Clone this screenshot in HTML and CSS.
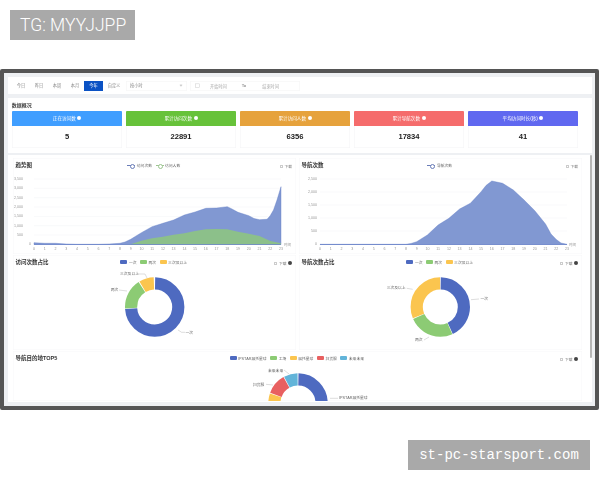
FILE: index.html
```html
<!DOCTYPE html>
<html lang="zh">

<head>
    <meta charset="UTF-8">
    <title>数据概况</title>
    <link rel="stylesheet" href="styles.css">
</head>

<body>
    <div class="tag tag_tg">TG: MYYJJPP</div>

    <section class="frame">
        <div class="toolbar">
            <ul class="range_btns">
                <li>今日</li>
                <li>昨日</li>
                <li>本周</li>
                <li>本月</li>
                <li class="on">今年</li>
                <li class="wide">自定义</li>
            </ul>
            <div class="select_box">按小时<span class="caret"></span></div>
            <div class="date_box">
                <svg class="cal_icon" viewBox="0 0 6 6">
                    <rect x="0.5" y="1" width="5" height="4.5" fill="none" stroke="#ccc" stroke-width="0.6" />
                </svg>
                <span class="date_start">开始时间</span>
                <span class="date_to">To</span>
                <span class="date_end">结束时间</span>
            </div>
        </div><!-- .toolbar end -->

        <div class="overview">
            <h2>数据概况</h2>
            <div class="cards">
                <div class="card">
                    <div class="card_head blue">正在访问数<i class="info"></i></div>
                    <div class="card_num">5</div>
                </div>
                <div class="card">
                    <div class="card_head green">累计访问次数<i class="info"></i></div>
                    <div class="card_num">22891</div>
                </div>
                <div class="card">
                    <div class="card_head orange">累计访问人数<i class="info"></i></div>
                    <div class="card_num">6356</div>
                </div>
                <div class="card">
                    <div class="card_head red">累计导航次数<i class="info"></i></div>
                    <div class="card_num">17834</div>
                </div>
                <div class="card">
                    <div class="card_head indigo">平均访问时长(秒)<i class="info"></i></div>
                    <div class="card_num">41</div>
                </div>
            </div>
        </div><!-- .overview end -->

        <div class="chart_wrap">
            <div class="chart_grid">

                <!-- 趋势图 -->
                <div class="cell">
                    <div class="cell_head">
                        <h3>趋势图</h3>
                        <ul class="legend">
                            <li><i class="mark_line line_blue"></i>访问次数</li>
                            <li><i class="mark_line line_green"></i>访问人数</li>
                        </ul>
                        <div class="down"><i class="down_icon"></i>下载</div>
                    </div>
                    <svg class="chart_svg" width="283" height="82" viewBox="13 172 283 82">
                        <g class="grid_lines">
                            <path d="M34 179H281M34 188.3H281M34 197.7H281M34 207H281M34 216.4H281M34 225.7H281M34 235H281" />
                        </g>
                        <g class="y_label">
                            <text x="23" y="180">3,500</text>
                            <text x="23" y="189.3">3,000</text>
                            <text x="23" y="198.7">2,500</text>
                            <text x="23" y="208">2,000</text>
                            <text x="23" y="217.4">1,500</text>
                            <text x="23" y="226.7">1,000</text>
                            <text x="23" y="236">500</text>
                            <text x="31" y="245.3">0</text>
                        </g>
                        <polygon class="area_blue" points="34,244.5 34,242.7 44.7,243.3 55.5,243.3 66.2,244 77,244.3 87.7,244.3 98.4,244.3 109.2,244 120,243.3 125,242 130.7,239.3 141.4,232.7 152.1,226.7 162.9,223.3 173.6,220 184.4,215 195.1,212 205.8,208.3 216.6,208 227.3,206.7 232,209 238,212.3 248.8,215.7 254,218.5 259.5,219.7 267,219.3 270,216 273.5,210 277,200 281,186.7 281,244.5" />
                        <polygon class="area_green" points="120,244.5 130.7,244.3 141.4,240.7 152.1,238.3 162.9,236.7 173.6,234.7 184.4,233.3 195.1,231 205.8,229.3 216.6,229 227.3,229.3 238,231.7 248.8,233.7 259.5,236 270.3,241 281,243.3 281,244.5" />
                        <path class="axis_line" d="M34 244.5H281" />
                        <g class="x_label">
                            <text x="34" y="249.5">0</text><text x="44.7" y="249.5">1</text><text x="55.5" y="249.5">2</text><text x="66.2" y="249.5">3</text><text x="77" y="249.5">4</text><text x="87.7" y="249.5">5</text><text x="98.4" y="249.5">6</text><text x="109.2" y="249.5">7</text><text x="120" y="249.5">8</text><text x="130.7" y="249.5">9</text><text x="141.4" y="249.5">10</text><text x="152.1" y="249.5">11</text><text x="162.9" y="249.5">12</text><text x="173.6" y="249.5">13</text><text x="184.4" y="249.5">14</text><text x="195.1" y="249.5">15</text><text x="205.8" y="249.5">16</text><text x="216.6" y="249.5">17</text><text x="227.3" y="249.5">18</text><text x="238" y="249.5">19</text><text x="248.8" y="249.5">20</text><text x="259.5" y="249.5">21</text><text x="270.3" y="249.5">22</text><text x="281" y="249.5">23</text>
                        </g>
                        <text class="tick_text" x="284" y="245.5">时间</text>
                    </svg>
                </div>

                <!-- 导航次数 -->
                <div class="cell">
                    <div class="cell_head">
                        <h3>导航次数</h3>
                        <ul class="legend">
                            <li><i class="mark_line line_blue"></i>导航次数</li>
                        </ul>
                        <div class="down"><i class="down_icon"></i>下载</div>
                    </div>
                    <svg class="chart_svg" width="283" height="82" viewBox="299 172 283 82">
                        <g class="grid_lines">
                            <path d="M320 179H567M320 192H567M320 205H567M320 218H567M320 231H567" />
                        </g>
                        <g class="y_label">
                            <text x="317" y="180">2,500</text>
                            <text x="317" y="193">2,000</text>
                            <text x="317" y="206">1,500</text>
                            <text x="317" y="219">1,000</text>
                            <text x="317" y="232">500</text>
                            <text x="317" y="245.3">0</text>
                        </g>
                        <polygon class="area_blue" points="320,244.5 320,244.3 405.9,244.3 411,243.5 416.7,241.7 427.4,235 438.1,225 448.9,218.3 459.6,209 470.4,203.3 481.1,191.7 486,185.5 491.8,181 502.6,183.3 513.3,190 524.1,200 534.8,210.7 545.5,224 551,234 556.3,239.5 561,243 567,244.3 567,244.5" />
                        <path class="axis_line" d="M320 244.5H567" />
                        <g class="x_label">
                            <text x="320" y="249.5">0</text><text x="330.7" y="249.5">1</text><text x="341.5" y="249.5">2</text><text x="352.2" y="249.5">3</text><text x="363" y="249.5">4</text><text x="373.7" y="249.5">5</text><text x="384.4" y="249.5">6</text><text x="395.2" y="249.5">7</text><text x="405.9" y="249.5">8</text><text x="416.7" y="249.5">9</text><text x="427.4" y="249.5">10</text><text x="438.1" y="249.5">11</text><text x="448.9" y="249.5">12</text><text x="459.6" y="249.5">13</text><text x="470.4" y="249.5">14</text><text x="481.1" y="249.5">15</text><text x="491.8" y="249.5">16</text><text x="502.6" y="249.5">17</text><text x="513.3" y="249.5">18</text><text x="524.1" y="249.5">19</text><text x="534.8" y="249.5">20</text><text x="545.5" y="249.5">21</text><text x="556.3" y="249.5">22</text><text x="567" y="249.5">23</text>
                        </g>
                        <text class="tick_text" x="569" y="245.5">时间</text>
                    </svg>
                </div>

                <!-- 访问次数占比 -->
                <div class="cell">
                    <div class="cell_head">
                        <h3>访问次数占比</h3>
                        <ul class="legend">
                            <li><i class="mark_box box_blue"></i>一次</li>
                            <li><i class="mark_box box_green"></i>两次</li>
                            <li><i class="mark_box box_yellow"></i>三次及以上</li>
                        </ul>
                        <div class="down"><i class="down_icon"></i>下载<i class="help"></i></div>
                    </div>
                    <svg class="chart_svg" width="283" height="81" viewBox="13 269 283 81">
                        <g transform="rotate(-90 154.7 307)">
                            <circle class="arc arc_blue" cx="154.7" cy="307" r="23.6" pathLength="360" stroke-dasharray="265 95" stroke-dashoffset="-1" />
                            <circle class="arc arc_green" cx="154.7" cy="307" r="23.6" pathLength="360" stroke-dasharray="60 300" stroke-dashoffset="-267" />
                            <circle class="arc arc_yellow" cx="154.7" cy="307" r="23.6" pathLength="360" stroke-dasharray="29 331" stroke-dashoffset="-329" />
                        </g>
                        <path class="lead" d="M178 330L181.6 332.3H185M119 290L127 291M139 274H145L147 278" />
                        <text class="pie_text" x="185.5" y="333.5">一次</text>
                        <text class="pie_text" x="110.7" y="290.5">两次</text>
                        <text class="pie_text" x="120" y="274.5">三次及以上</text>
                    </svg>
                </div>

                <!-- 导航次数占比 -->
                <div class="cell">
                    <div class="cell_head">
                        <h3>导航次数占比</h3>
                        <ul class="legend">
                            <li><i class="mark_box box_blue"></i>一次</li>
                            <li><i class="mark_box box_green"></i>两次</li>
                            <li><i class="mark_box box_yellow"></i>三次及以上</li>
                        </ul>
                        <div class="down"><i class="down_icon"></i>下载<i class="help"></i></div>
                    </div>
                    <svg class="chart_svg" width="283" height="81" viewBox="299 269 283 81">
                        <g transform="rotate(-90 440.3 307)">
                            <circle class="arc arc_blue" cx="440.3" cy="307" r="23.6" pathLength="360" stroke-dasharray="154 206" stroke-dashoffset="-1" />
                            <circle class="arc arc_green" cx="440.3" cy="307" r="23.6" pathLength="360" stroke-dasharray="90 270" stroke-dashoffset="-156" />
                            <circle class="arc arc_yellow" cx="440.3" cy="307" r="23.6" pathLength="360" stroke-dasharray="112 248" stroke-dashoffset="-247.5" />
                        </g>
                        <path class="lead" d="M471 299.7L479 299M424 340L429 337M406.7 288.3L412.7 289.3" />
                        <text class="pie_text" x="480.5" y="300.2">一次</text>
                        <text class="pie_text" x="415" y="340.5">两次</text>
                        <text class="pie_text" x="386.7" y="288.9">三次及以上</text>
                    </svg>
                </div>

                <!-- 导航目的地TOP5 -->
                <div class="cell cell_full">
                    <div class="cell_head">
                        <h3>导航目的地TOP5</h3>
                        <ul class="legend">
                            <li><i class="mark_box box_blue"></i>IPSTAR展托星球</li>
                            <li><i class="mark_box box_green"></i>工场</li>
                            <li><i class="mark_box box_yellow"></i>展托星球</li>
                            <li><i class="mark_box box_red"></i>扫货服</li>
                            <li><i class="mark_box box_sky"></i>未来未来</li>
                        </ul>
                        <div class="down"><i class="down_icon"></i>下载<i class="help"></i></div>
                    </div>
                    <svg class="chart_svg" width="569" height="36" viewBox="13 365 569 36">
                        <g transform="rotate(-90 298 403)">
                            <circle class="arc arc_blue" cx="298" cy="403" r="23.6" pathLength="360" stroke-dasharray="120 240" stroke-dashoffset="-1" />
                            <circle class="arc arc_yellow" cx="298" cy="403" r="23.6" pathLength="360" stroke-dasharray="19 341" stroke-dashoffset="-270" />
                            <circle class="arc arc_red" cx="298" cy="403" r="23.6" pathLength="360" stroke-dasharray="40 320" stroke-dashoffset="-290.5" />
                            <circle class="arc arc_sky" cx="298" cy="403" r="23.6" pathLength="360" stroke-dasharray="27 333" stroke-dashoffset="-332" />
                        </g>
                        <path class="lead" d="M284 370L289 374M266 384.3L273 385M330 398.3H338" />
                        <text class="pie_text" x="268" y="371.5">未来未来</text>
                        <text class="pie_text" x="253" y="385.8">扫货服</text>
                        <text class="pie_text" x="339" y="399.2">IPSTAR展托星球</text>
                    </svg>
                </div>

            </div><!-- .chart_grid end -->
            <div class="scroll_bar"></div>
        </div><!-- .chart_wrap end -->
    </section><!-- .frame end -->

    <div class="tag_row">
        <div class="tag tag_site">st-pc-starsport.com</div>
    </div>
</body>

</html>
```

FILE: styles.css
```css
* {
    margin: 0;
    padding: 0;
    box-sizing: border-box;
}

li {
    list-style: none;
}

i {
    display: block;
}

body {
    width: 600px;
    height: 480px;
    overflow: hidden;
    background-color: #fff;
    font-family: "Liberation Sans", "Noto Sans CJK SC", sans-serif;
}

.tag {
    height: 30px;
    line-height: 30px;
    background-color: #a9a9a9;
    color: #fff;
}

.tag_tg {
    width: 125px;
    margin: 10px 0 29px 10px;
    padding-left: 10px;
    font-size: 17.5px;
    font-family: "Roboto", "Liberation Sans", sans-serif;
    font-weight: 300;
}

.tag_row {
    display: flex;
    justify-content: flex-end;
    margin-top: 30px;
    padding-right: 10px;
}

.tag_site {
    width: 182px;
    text-align: center;
    font-size: 14px;
    font-family: "Liberation Mono", monospace;
}

.frame {
    width: 599px;
    height: 341px;
    padding: 4px 3px 0;
    border: 4px solid #555;
    border-radius: 2px;
    background-color: #eef0f3;
    display: flex;
    flex-direction: column;
    overflow: hidden;
    filter: blur(0.5px);
}

/* 상단 툴바 */
.toolbar {
    height: 17px;
    margin-left: 1px;
    width: 584px;
    background-color: #fff;
    display: flex;
    align-items: center;
    padding-left: 4px;
    font-size: 4.2px;
    color: #888;
}

.range_btns {
    display: flex;
    align-items: center;
}

.range_btns li {
    width: 18px;
    height: 10px;
    line-height: 10px;
    text-align: center;
}

.range_btns li.on {
    width: 19px;
    background-color: #0b52c4;
    color: #fff;
}

.range_btns li.wide {
    width: 22px;
}

.select_box {
    width: 61px;
    height: 10px;
    line-height: 10px;
    margin-left: 1px;
    padding-left: 4px;
    position: relative;
    box-shadow: inset 0 0 0 0.5px #f3f3f3;
    border-radius: 1px;
}

.caret {
    position: absolute;
    right: 5px;
    top: 3.5px;
    width: 2px;
    height: 2px;
    border-right: 0.5px solid #ccc;
    border-bottom: 0.5px solid #ccc;
    transform: rotate(45deg);
}

.date_box {
    width: 110px;
    height: 10px;
    margin-left: 3px;
    padding-left: 5px;
    display: flex;
    align-items: center;
    box-shadow: inset 0 0 0 0.5px #f3f3f3;
    border-radius: 1px;
    color: #aaa;
}

.cal_icon {
    width: 5px;
    height: 5px;
}

.date_start {
    margin-left: 10px;
}

.date_to {
    margin-left: 15px;
    color: #666;
}

.date_end {
    margin-left: 16px;
}

/* 데이터 개요 */
.overview {
    width: 584px;
    height: 54.5px;
    margin: 4px 0 2.5px 1px;
    padding: 4px 13.7px 0 3.7px;
    background-color: #fff;
}

.overview h2 {
    height: 8.7px;
    line-height: 6px;
    font-size: 5px;
    font-weight: 700;
    color: #444;
}

.cards {
    display: grid;
    grid-template-columns: repeat(5, 1fr);
    gap: 3.3px;
}

.card {
    height: 37.7px;
    box-shadow: inset 0 0 0 0.5px #f3f4f6;
}

.card_head {
    height: 15.6px;
    border-radius: 1px 1px 0 0;
    display: flex;
    justify-content: center;
    align-items: center;
    gap: 1.5px;
    font-size: 4.6px;
    color: #fff;
}

.blue {
    background-color: #409eff;
}

.green {
    background-color: #67c23a;
}

.orange {
    background-color: #e6a23c;
}

.red {
    background-color: #f56c6c;
}

.indigo {
    background-color: #6068f0;
}

.info {
    width: 4px;
    height: 4px;
    border-radius: 50%;
    background-color: #fff;
}

.card_num {
    height: 22px;
    line-height: 22px;
    text-align: center;
    font-size: 7.6px;
    font-weight: 700;
    color: #222;
}

/* 차트 영역 */
.chart_wrap {
    flex: 1;
    min-height: 0;
    width: 584px;
    margin: 0 0 4px 1px;
    background-color: #fff;
    display: flex;
    overflow: hidden;
}

.chart_grid {
    display: grid;
    grid-template-columns: 283px 283px;
    grid-template-rows: 96px 95px 50px;
    gap: 1px 3px;
    padding: 3px 0 0 5px;
}

.scroll_bar {
    width: 2.5px;
    height: 203px;
    margin-left: 7.5px;
    background-color: #b5b5b5;
    border-radius: 1px;
}

.cell {
    box-shadow: inset 0 0 0 0.5px #f8f8f9;
    overflow: hidden;
}

.cell_full {
    grid-column: 1 / 3;
}

.cell_head {
    height: 14px;
    padding: 0 4px 0 2.5px;
    display: grid;
    grid-template-columns: 1fr auto 1fr;
    align-items: center;
}

.cell_head h3 {
    font-size: 5.5px;
    font-weight: 700;
    color: #333;
}

.legend {
    display: flex;
    align-items: center;
    gap: 3.5px;
    font-size: 3.8px;
    color: #666;
}

.legend li {
    display: flex;
    align-items: center;
    gap: 1.5px;
}

.mark_line {
    width: 8px;
    height: 3px;
    position: relative;
}

.mark_line::before {
    content: "";
    position: absolute;
    left: 0;
    right: 0;
    top: 1.2px;
    height: 0.6px;
    background-color: currentColor;
}

.mark_line::after {
    content: "";
    position: absolute;
    left: 2.5px;
    top: 0;
    width: 3px;
    height: 3px;
    border: 0.5px solid currentColor;
    border-radius: 50%;
    background-color: #fff;
}

.line_blue {
    color: #6a7db8;
}

.line_green {
    color: #9cc58f;
}

.mark_box {
    width: 7px;
    height: 4px;
    border-radius: 1px;
}

.box_blue {
    background-color: #4e6ac0;
}

.box_green {
    background-color: #8ccb74;
}

.box_yellow {
    background-color: #fbc54f;
}

.box_red {
    background-color: #e86060;
}

.box_sky {
    background-color: #62b4d9;
}

.down {
    justify-self: end;
    display: flex;
    align-items: center;
    gap: 1.5px;
    padding-top: 2px;
    font-size: 3.8px;
    color: #777;
}

.down_icon {
    width: 3px;
    height: 3px;
    border: 0.5px solid #ccc;
}

.help {
    width: 4px;
    height: 4px;
    border-radius: 50%;
    background-color: #444;
}

.chart_svg {
    display: block;
}

.chart_svg text {
    font-family: "Liberation Sans", "Noto Sans CJK SC", sans-serif;
}

.grid_lines path {
    fill: none;
    stroke: #f1f2f4;
    stroke-width: 0.5;
}

.y_label text {
    font-size: 3.6px;
    fill: #999;
    text-anchor: end;
}

.x_label text {
    font-size: 3.6px;
    fill: #999;
    text-anchor: middle;
}

.tick_text {
    font-size: 3.6px;
    fill: #999;
}

.area_blue {
    fill: #8198d2;
    stroke: #5f7bc6;
    stroke-width: 0.4;
}

.area_green {
    fill: #8cc08a;
}

.axis_line {
    fill: none;
    stroke: #5f7bc6;
    stroke-width: 0.6;
}

.arc {
    fill: none;
    stroke-width: 12.2;
}

.arc_blue {
    stroke: #4e6ac0;
}

.arc_green {
    stroke: #8ccb74;
}

.arc_yellow {
    stroke: #fbc54f;
}

.arc_red {
    stroke: #e86060;
}

.arc_sky {
    stroke: #62b4d9;
}

.lead {
    fill: none;
    stroke: #bbb;
    stroke-width: 0.5;
}

.pie_text {
    font-size: 3.8px;
    fill: #666;
}
```
